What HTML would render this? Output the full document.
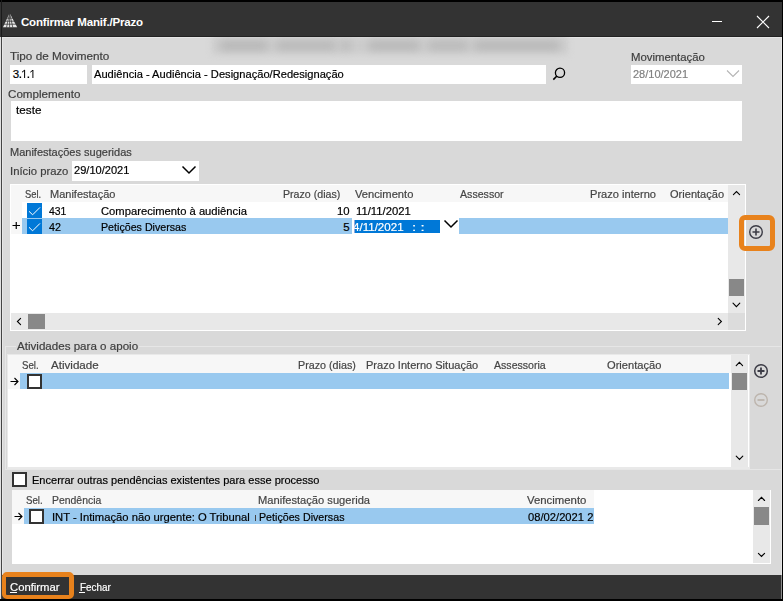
<!DOCTYPE html>
<html><head><meta charset="utf-8">
<style>
html,body{margin:0;padding:0;}
body{width:783px;height:601px;position:relative;overflow:hidden;background:#d9d9d9;font-family:"Liberation Sans",sans-serif;}
.a{position:absolute;box-sizing:border-box;}
.t{position:absolute;white-space:nowrap;line-height:14px;font-family:"Liberation Sans",sans-serif;-webkit-text-stroke:0.2px currentColor;}
.w{background:#fff;}
.hdr{background:#f7f7f7;}
.sb{background:#e8e8e8;}
.th{background:#888888;}
.lb{background:#99c9ef;}
</style></head><body>
<!-- window frame -->
<div class="a" style="left:0;top:0;width:783px;height:2px;background:#000"></div>
<div class="a" style="left:0;top:2px;width:1px;height:35px;background:#333"></div>
<div class="a" style="left:1px;top:0;width:1px;height:601px;background:#444"></div>
<div class="a" style="left:1px;top:0;width:1px;height:37px;background:#1a1a1a"></div>
<div class="a" style="left:0;top:37px;width:1px;height:564px;background:#e0e0e0"></div>
<div class="a" style="left:2px;top:37px;width:779px;height:1px;background:#e6e6e6"></div>
<div class="a" style="left:2px;top:37px;width:1px;height:538px;background:#e6e6e6"></div>
<div class="a" style="left:781px;top:37px;width:1px;height:538px;background:#e6e6e6"></div>
<div class="a" style="left:782px;top:0;width:1px;height:601px;background:#000"></div>
<div class="a" style="left:0;top:599px;width:783px;height:2px;background:#000"></div>
<!-- title bar -->
<div class="a" style="left:2px;top:2px;width:780px;height:34px;background:#333333"></div>
<div class="a" style="left:2px;top:36px;width:780px;height:1px;background:#222"></div>
<svg class="a" style="left:0px;top:10px" width="24" height="20" viewBox="0 0 24 20">
 <path d="M9.6 3 L17.2 17.2 L3 17.2 Z" fill="#e8e8e8"/>
 <path d="M2 14.2 L19 14.2 M2 11.2 L19 11.2 M2 8.2 L19 8.2 M9.6 3 L6.5 17.5 M9.6 3 L12.8 17.5 M9.6 3 L9.6 17.5" stroke="#333" stroke-width="0.75" fill="none"/>
</svg>
<div class="a" style="left:712px;top:21px;width:10px;height:1px;background:#fff"></div>
<svg class="a" style="left:756px;top:15px" width="14" height="14" viewBox="0 0 14 14">
 <path d="M1 1 L13 13 M13 1 L1 13" stroke="#fff" stroke-width="1.1" fill="none"/>
</svg>
<!-- blurred redaction -->
<div class="a" style="left:190px;top:37px;width:400px;height:24px;overflow:hidden">
 <div class="a" style="left:22px;top:0px;width:356px;height:17px;background:#cdcdcd;filter:blur(3px)"></div>
 <div class="a" style="left:30px;top:4px;width:48px;height:9px;background:#b5b5b5;filter:blur(4px);border-radius:4px"></div>
 <div class="a" style="left:86px;top:4px;width:60px;height:9px;background:#b7b7b7;filter:blur(4px);border-radius:4px"></div>
 <div class="a" style="left:150px;top:4px;width:12px;height:9px;background:#bababa;filter:blur(4px);border-radius:4px"></div>
 <div class="a" style="left:178px;top:4px;width:52px;height:9px;background:#b6b6b6;filter:blur(4px);border-radius:4px"></div>
 <div class="a" style="left:238px;top:4px;width:40px;height:9px;background:#b8b8b8;filter:blur(4px);border-radius:4px"></div>
 <div class="a" style="left:284px;top:4px;width:86px;height:9px;background:#b6b6b6;filter:blur(4px);border-radius:4px"></div>
</div>
<!-- fields -->
<div class="a w" style="left:10px;top:65px;width:77px;height:19px"></div>
<div class="a w" style="left:92px;top:65px;width:454px;height:19px"></div>
<svg class="a" style="left:552px;top:67px" width="15" height="14" viewBox="0 0 15 14">
 <circle cx="8" cy="5.8" r="4.6" stroke="#000" stroke-width="1.3" fill="none"/>
 <path d="M4.9 9 L1.3 12.6" stroke="#000" stroke-width="1.6"/>
</svg>
<div class="a w" style="left:631px;top:65px;width:111px;height:19px"></div>
<svg class="a" style="left:726px;top:69px" width="14" height="10" viewBox="0 0 14 10">
 <path d="M1 1.5 L7 7.5 L13 1.5" stroke="#b5b5b5" stroke-width="1.1" fill="none"/>
</svg>
<div class="a w" style="left:11px;top:101px;width:731px;height:40px"></div>
<div class="a w" style="left:72px;top:161px;width:127px;height:20px"></div>
<svg class="a" style="left:181px;top:165px" width="16" height="10" viewBox="0 0 16 10">
 <path d="M1.5 1.5 L8 8 L14.5 1.5" stroke="#000" stroke-width="1.5" fill="none"/>
</svg>
<!-- grid 1 -->
<div class="a w" style="left:10px;top:184px;width:736px;height:147px"></div>
<div class="a hdr" style="left:11px;top:185px;width:717px;height:17px"></div>
<div class="a hdr" style="left:11px;top:202px;width:11px;height:32px"></div>
<div class="a lb" style="left:22px;top:218px;width:330px;height:16px"></div>
<div class="a" style="left:354px;top:220px;width:86px;height:13px;background:#0078d7"></div>
<div class="a lb" style="left:459px;top:218px;width:269px;height:16px"></div>
<svg class="a" style="left:443px;top:219px" width="16" height="10" viewBox="0 0 16 10">
 <path d="M1.5 1.5 L8 8 L14.5 1.5" stroke="#000" stroke-width="1.5" fill="none"/>
</svg>
<div class="a" style="left:27px;top:203px;width:15px;height:15px;background:#0078d7"></div>
<div class="a" style="left:27px;top:219px;width:15px;height:15px;background:#0078d7"></div>
<svg class="a" style="left:27px;top:203px" width="15" height="31" viewBox="0 0 15 31">
 <path d="M2 8.3 L5.6 11.8 L13 4.4 M2 24.3 L5.6 27.8 L13 20.4" stroke="#fff" stroke-width="1" fill="none"/>
</svg>
<svg class="a" style="left:12px;top:221px" width="9" height="9" viewBox="0 0 9 9">
 <path d="M0.5 4.5 L8 4.5 M4.25 1 L4.25 8" stroke="#000" stroke-width="1.2" fill="none"/>
</svg>
<div class="a sb" style="left:728px;top:185px;width:17px;height:128px"></div>
<div class="a th" style="left:729px;top:279px;width:15px;height:17px"></div>
<div class="a sb" style="left:11px;top:313px;width:717px;height:17px"></div>
<div class="a th" style="left:28px;top:314px;width:17px;height:15px"></div>
<div class="a" style="left:728px;top:313px;width:17px;height:17px;background:#dcdcdc"></div>
<!-- orange box plus -->
<div class="a" style="left:739px;top:215px;width:36px;height:36px;border:5px solid #e8821c;border-radius:6px"></div>
<svg class="a" style="left:748px;top:224px" width="16" height="16" viewBox="0 0 16 16">
 <circle cx="8" cy="8" r="6.3" stroke="#3c3c46" stroke-width="1.4" fill="none"/>
 <path d="M4.5 8 L11.5 8 M8 4.5 L8 11.5" stroke="#3c3c46" stroke-width="1.6" fill="none"/>
</svg>
<!-- groupbox 2 -->
<div class="a" style="left:5px;top:346px;width:776px;height:124px;border:1px solid #e6e6e6;border-right:none"></div>
<div class="a" style="left:16px;top:340px;width:123px;height:12px;background:#d9d9d9"></div>
<div class="a" style="left:7px;top:354px;width:743px;height:115px;background:#e9e9e9"></div>
<div class="a w" style="left:8px;top:355px;width:741px;height:112px"></div>
<div class="a hdr" style="left:8px;top:355px;width:723px;height:18px"></div>
<div class="a hdr" style="left:8px;top:373px;width:12px;height:16px"></div>
<div class="a lb" style="left:20px;top:373px;width:709px;height:16px"></div>
<div class="a" style="left:27px;top:374px;width:15px;height:15px;border:2px solid #333;background:#fff"></div>
<svg class="a" style="left:10px;top:377px" width="9" height="9" viewBox="0 0 9 9">
 <path d="M0.5 4.5 L8 4.5 M4.5 1 L8 4.5 L4.5 8" stroke="#000" stroke-width="1.1" fill="none"/>
</svg>
<div class="a sb" style="left:731px;top:355px;width:17px;height:112px"></div>
<div class="a th" style="left:732px;top:373px;width:15px;height:17px"></div>
<svg class="a" style="left:753px;top:363px" width="16" height="16" viewBox="0 0 16 16">
 <circle cx="8" cy="8" r="6.3" stroke="#3c3c46" stroke-width="1.5" fill="none"/>
 <path d="M4.5 8 L11.5 8 M8 4.5 L8 11.5" stroke="#3c3c46" stroke-width="1.8" fill="none"/>
</svg>
<svg class="a" style="left:753px;top:392px" width="16" height="16" viewBox="0 0 16 16">
 <circle cx="8" cy="8" r="6.3" stroke="#bdb5ad" stroke-width="1.4" fill="none"/>
 <path d="M4.5 8 L11.5 8" stroke="#bdb5ad" stroke-width="1.8" fill="none"/>
</svg>
<!-- encerrar -->
<div class="a" style="left:12px;top:472px;width:15px;height:15px;border:2px solid #333;background:#fff"></div>
<!-- grid 3 -->
<div class="a w" style="left:12px;top:490px;width:759px;height:74px"></div>
<div class="a hdr" style="left:12px;top:490px;width:582px;height:18px"></div>
<div class="a hdr" style="left:12px;top:508px;width:12px;height:16px"></div>
<div class="a lb" style="left:24px;top:508px;width:570px;height:16px"></div>
<div class="a" style="left:29px;top:509px;width:15px;height:15px;border:2px solid #333;background:#fff"></div>
<svg class="a" style="left:14px;top:512px" width="9" height="9" viewBox="0 0 9 9">
 <path d="M0.5 4.5 L8 4.5 M4.5 1 L8 4.5 L4.5 8" stroke="#000" stroke-width="1.1" fill="none"/>
</svg>
<div class="a sb" style="left:753px;top:490px;width:17px;height:73px"></div>
<div class="a th" style="left:754px;top:507px;width:15px;height:18px"></div>
<!-- bottom bar -->
<div class="a" style="left:2px;top:575px;width:779px;height:24px;background:#333333"></div>
<div class="a" style="left:781px;top:575px;width:1px;height:24px;background:#8a8a8a"></div>
<div class="a" style="left:2px;top:572px;width:72px;height:27px;border:5px solid #e8821c;border-left-width:4px;border-bottom-width:4px;border-radius:5px;background:#333"></div>
<div class="a" style="left:10px;top:592px;width:7px;height:1px;background:#fff"></div>
<div class="a" style="left:79px;top:592px;width:6px;height:1px;background:#fff"></div>
<div class="a" style="left:255px;top:515px;width:1px;height:6px;background:#444"></div>
<svg class="a" style="left:0;top:0" width="783" height="601" viewBox="0 0 783 601">
 <g stroke="#000" stroke-width="1.1" fill="none" stroke-linecap="round" stroke-linejoin="miter">
  <path d="M733.4 194.6 L736.5 191.5 L739.6 194.6"/>
  <path d="M733 303.2 L736.4 306.6 L739.8 303.2"/>
  <path d="M20.6 318.3 L17.4 321.5 L20.6 324.6"/>
  <path d="M718.2 318.3 L721.4 321.5 L718.2 324.6"/>
  <path d="M736.2 365.6 L739.4 362.4 L742.6 365.6"/>
  <path d="M736.2 456.2 L739.5 459.5 L742.8 456.2"/>
  <path d="M758.4 500.5 L761.5 497.4 L764.6 500.5"/>
  <path d="M758.4 553.3 L761.5 556.4 L764.6 553.3"/>
 </g>
</svg>
<svg class="a" style="left:0;top:60px" width="40" height="25" viewBox="0 0 40 25">
 <rect x="19.6" y="16.5" width="1.5" height="1.5" fill="#000"/>
 <rect x="27.6" y="16.5" width="1.5" height="1.5" fill="#000"/>
 <path d="M24.6 10 L24.6 18 M24.6 10.2 L22 12.2 M32.9 10 L32.9 18 M32.9 10.2 L30.3 12.2" stroke="#000" stroke-width="1" fill="none"/>
</svg>
<div class="t" style="left:21.00px;top:14.60px;color:#ffffff;font-size:11.5px;font-weight:bold;letter-spacing:-0.183px;-webkit-text-stroke:0;">Confirmar Manif./Prazo</div>
<div class="t" style="left:10.40px;top:49.00px;color:#3e3e3e;font-size:11.5px;font-weight:normal;transform-origin:0 0;transform:scaleX(1.0209);">Tipo de Movimento</div>
<div class="t" style="left:630.80px;top:50.00px;color:#3e3e3e;font-size:11.5px;font-weight:normal;transform-origin:0 0;transform:scaleX(0.9881);">Movimentação</div>
<div class="t" style="left:12.80px;top:67.00px;color:#000000;font-size:11.5px;font-weight:normal;letter-spacing:0.000px;">3</div>
<div class="t" style="left:94.30px;top:67.00px;color:#000000;font-size:11.5px;font-weight:normal;transform-origin:0 0;transform:scaleX(0.9671);">Audiência - Audiência - Designação/Redesignação</div>
<div class="t" style="left:633.30px;top:67.20px;color:#808080;font-size:11.5px;font-weight:normal;transform-origin:0 0;transform:scaleX(0.9570);">28/10/2021</div>
<div class="t" style="left:8.30px;top:87.40px;color:#3e3e3e;font-size:11.5px;font-weight:normal;transform-origin:0 0;transform:scaleX(1.0113);">Complemento</div>
<div class="t" style="left:16.00px;top:102.60px;color:#000000;font-size:11.5px;font-weight:normal;transform-origin:0 0;transform:scaleX(1.0189);">teste</div>
<div class="t" style="left:10.20px;top:145.10px;color:#3e3e3e;font-size:11.5px;font-weight:normal;transform-origin:0 0;transform:scaleX(0.9572);">Manifestações sugeridas</div>
<div class="t" style="left:9.62px;top:164.00px;color:#3e3e3e;font-size:11.5px;font-weight:normal;transform-origin:0 0;transform:scaleX(0.9819);">Início prazo</div>
<div class="t" style="left:74.00px;top:162.80px;color:#000000;font-size:11.5px;font-weight:normal;transform-origin:0 0;transform:scaleX(0.9622);">29/10/2021</div>
<div class="t" style="left:24.60px;top:186.80px;color:#444444;font-size:11.5px;font-weight:normal;transform-origin:0 0;transform:scaleX(0.8154);">Sel.</div>
<div class="t" style="left:49.80px;top:186.80px;color:#444444;font-size:11.5px;font-weight:normal;transform-origin:0 0;transform:scaleX(0.9558);">Manifestação</div>
<div class="t" style="left:282.80px;top:186.80px;color:#444444;font-size:11.5px;font-weight:normal;transform-origin:0 0;transform:scaleX(0.9234);">Prazo (dias)</div>
<div class="t" style="left:355.00px;top:186.80px;color:#444444;font-size:11.5px;font-weight:normal;transform-origin:0 0;transform:scaleX(0.9715);">Vencimento</div>
<div class="t" style="left:460.00px;top:186.80px;color:#444444;font-size:11.5px;font-weight:normal;transform-origin:0 0;transform:scaleX(0.9228);">Assessor</div>
<div class="t" style="left:590.40px;top:186.80px;color:#444444;font-size:11.5px;font-weight:normal;transform-origin:0 0;transform:scaleX(0.9647);">Prazo interno</div>
<div class="t" style="left:670.20px;top:186.80px;color:#444444;font-size:11.5px;font-weight:normal;transform-origin:0 0;transform:scaleX(0.9614);">Orientação</div>
<div class="t" style="left:49.00px;top:203.90px;color:#000000;font-size:11.5px;font-weight:normal;transform-origin:0 0;transform:scaleX(0.9047);">431</div>
<div class="t" style="left:101.40px;top:203.90px;color:#000000;font-size:11.5px;font-weight:normal;transform-origin:0 0;transform:scaleX(0.9754);">Comparecimento à audiência</div>
<div class="t" style="left:337.00px;top:203.90px;color:#000000;font-size:11.5px;font-weight:normal;transform-origin:0 0;transform:scaleX(0.9842);">10</div>
<div class="t" style="left:355.60px;top:203.90px;color:#000000;font-size:11.5px;font-weight:normal;transform-origin:0 0;transform:scaleX(0.9810);">11/11/2021</div>
<div class="t" style="left:49.00px;top:219.60px;color:#000000;font-size:11.5px;font-weight:normal;transform-origin:0 0;transform:scaleX(0.9358);">42</div>
<div class="t" style="left:101.40px;top:219.60px;color:#000000;font-size:11.5px;font-weight:normal;transform-origin:0 0;transform:scaleX(0.9276);">Petições Diversas</div>
<div class="t" style="left:343.30px;top:219.60px;color:#000000;font-size:11.5px;font-weight:normal;letter-spacing:0.000px;">5</div>
<div class="t" style="left:353.20px;top:219.60px;color:#ffffff;font-size:11.5px;font-weight:normal;transform-origin:0 0;transform:scaleX(1.0058);">4/11/2021</div>
<div class="t" style="left:411.69px;top:219.60px;color:#ffffff;font-size:11.5px;font-weight:normal;transform-origin:0 0;transform:scaleX(1.3111);">: :</div>
<div class="t" style="left:17.30px;top:339.00px;color:#3e3e3e;font-size:11.5px;font-weight:normal;transform-origin:0 0;transform:scaleX(1.0075);">Atividades para o apoio</div>
<div class="t" style="left:21.90px;top:357.60px;color:#444444;font-size:11.5px;font-weight:normal;transform-origin:0 0;transform:scaleX(0.8409);">Sel.</div>
<div class="t" style="left:51.20px;top:357.60px;color:#444444;font-size:11.5px;font-weight:normal;transform-origin:0 0;transform:scaleX(1.0083);">Atividade</div>
<div class="t" style="left:298.30px;top:357.60px;color:#444444;font-size:11.5px;font-weight:normal;transform-origin:0 0;transform:scaleX(0.9330);">Prazo (dias)</div>
<div class="t" style="left:366.30px;top:357.60px;color:#444444;font-size:11.5px;font-weight:normal;transform-origin:0 0;transform:scaleX(0.9589);">Prazo Interno Situação</div>
<div class="t" style="left:494.30px;top:357.60px;color:#444444;font-size:11.5px;font-weight:normal;transform-origin:0 0;transform:scaleX(0.9200);">Assessoria</div>
<div class="t" style="left:607.00px;top:357.60px;color:#444444;font-size:11.5px;font-weight:normal;transform-origin:0 0;transform:scaleX(0.9667);">Orientação</div>
<div class="t" style="left:31.70px;top:472.70px;color:#000000;font-size:11.5px;font-weight:normal;transform-origin:0 0;transform:scaleX(0.9586);">Encerrar outras pendências existentes para esse processo</div>
<div class="t" style="left:26.40px;top:492.60px;color:#444444;font-size:11.5px;font-weight:normal;transform-origin:0 0;transform:scaleX(0.8409);">Sel.</div>
<div class="t" style="left:51.50px;top:492.60px;color:#444444;font-size:11.5px;font-weight:normal;transform-origin:0 0;transform:scaleX(0.9062);">Pendência</div>
<div class="t" style="left:257.80px;top:492.60px;color:#444444;font-size:11.5px;font-weight:normal;transform-origin:0 0;transform:scaleX(0.9681);">Manifestação sugerida</div>
<div class="t" style="left:527.10px;top:492.60px;color:#444444;font-size:11.5px;font-weight:normal;transform-origin:0 0;transform:scaleX(0.9883);">Vencimento</div>
<div class="t" style="left:51.62px;top:510.20px;color:#000000;font-size:11.5px;font-weight:normal;transform-origin:0 0;transform:scaleX(0.9768);">INT - Intimação não urgente: O Tribunal</div>
<div class="t" style="left:258.70px;top:510.20px;color:#000000;font-size:11.5px;font-weight:normal;transform-origin:0 0;transform:scaleX(0.9287);">Petições Diversas</div>
<div class="t" style="left:528.20px;top:510.20px;color:#000000;font-size:11.5px;font-weight:normal;transform-origin:0 0;transform:scaleX(0.9738);">08/02/2021 2</div>
<div class="t" style="left:10.20px;top:579.80px;color:#ffffff;font-size:11.5px;font-weight:normal;transform-origin:0 0;transform:scaleX(0.9812);">Confirmar</div>
<div class="t" style="left:79.60px;top:579.60px;color:#ffffff;font-size:11.5px;font-weight:normal;transform-origin:0 0;transform:scaleX(0.8620);">Fechar</div>
<div class="a" style="left:352px;top:218px;width:2px;height:16px;background:#fff"></div>
<div class="a" style="left:354px;top:220px;width:1px;height:13px;background:#f4c6d8;opacity:0.6"></div>
</body></html>
